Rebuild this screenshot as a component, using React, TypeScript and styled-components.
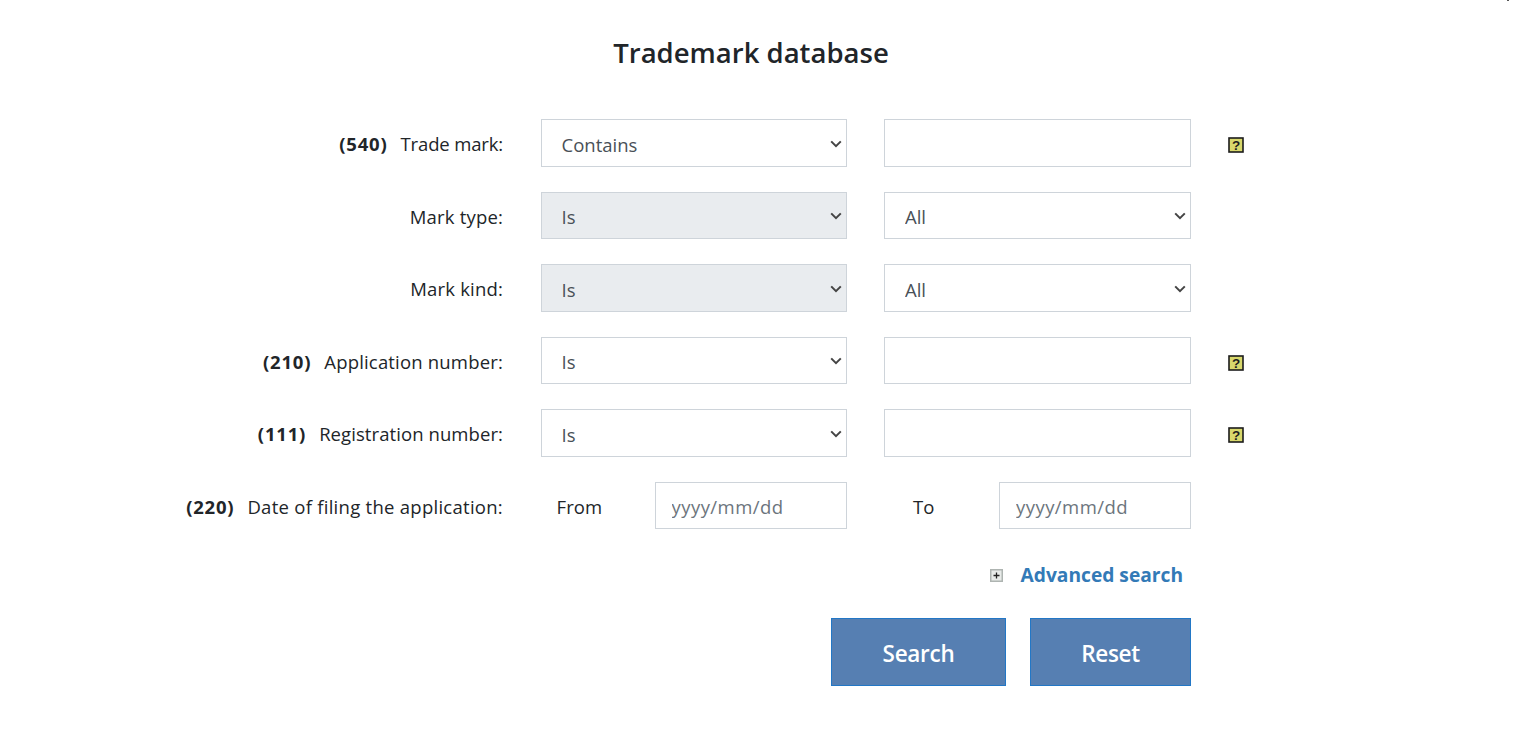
import styled, { createGlobalStyle } from "styled-components"

const GlobalStyle = createGlobalStyle`
  html, body {
    margin: 0;
    background: #fff;
  }
  body {
    font-family: "Open Sans", "Noto Sans", "Liberation Sans", sans-serif;
    color: #212529;
  }
`

const chevron = encodeURIComponent(
  `<svg xmlns="http://www.w3.org/2000/svg" width="12" height="8" viewBox="0 0 12 8"><path d="M1.2 1.4 6 6.2l4.8-4.8" fill="none" stroke="#444" stroke-width="2"/></svg>`
)

const Page = styled.div`
  width: 1516px;
  height: 733px;
  overflow: hidden;
  position: relative;
`

const CornerMark = styled.span`
  position: absolute;
  top: 0;
  right: 7px;
  width: 2px;
  height: 1px;
  background: #555;
`

const Title = styled.h1`
  margin: 0;
  padding-top: 33px;
  padding-right: 14px;
  height: 119px;
  box-sizing: border-box;
  text-align: center;
  font-size: 27.5px;
  line-height: 40px;
  font-weight: 600;
  color: #212529;
`

const Form = styled.form`
  display: flex;
  flex-direction: column;
  gap: 25px;
`

const Row = styled.div`
  display: grid;
  grid-template-columns: 503px 306px 307px 16px;
  column-gap: 37.5px;
  align-items: center;
  height: 47.5px;
`

const Label = styled.label<{ $track?: number }>`
  display: flex;
  justify-content: flex-end;
  gap: 13px;
  padding-top: 2px;
  font-size: 18.5px;
  letter-spacing: ${(p) => p.$track ?? 0.18}px;
  white-space: nowrap;
`

const Code = styled.b`
  font-weight: 700;
  letter-spacing: 0.8px;
`

const Select = styled.select<{ $locked?: boolean }>`
  appearance: none;
  width: 100%;
  height: 47.5px;
  box-sizing: border-box;
  padding: 3px 24px 0 20px;
  border: 1px solid #ced4da;
  border-radius: 0;
  background-color: ${(p) => (p.$locked ? "#e9ecef" : "#fff")};
  background-image: url("data:image/svg+xml,${chevron}");
  background-repeat: no-repeat;
  background-position: right 4px top calc(50% + 1px);
  color: #495057;
  font-family: inherit;
  font-size: 18.5px;
`

const Input = styled.input`
  width: 100%;
  height: 47.5px;
  box-sizing: border-box;
  padding: 3px 15px 0 16px;
  border: 1px solid #ced4da;
  border-radius: 0;
  background: #fff;
  color: #495057;
  font-family: inherit;
  font-size: 18.5px;
  letter-spacing: 0.45px;
  &::placeholder {
    color: #6c757d;
    opacity: 1;
  }
`

const DateCell = styled.div`
  display: grid;
  grid-template-columns: 1fr 192px;
  align-items: center;
`

const DateCaption = styled.span<{ $indent: number }>`
  padding: 2px 0 0 ${(p) => p.$indent}px;
  font-size: 18.5px;
  letter-spacing: 0.1px;
`

const HelpIcon = styled.svg`
  display: block;
  width: 16px;
  height: 16px;
  margin: 5px 0 0 -1px;
`

const AdvancedRow = styled.div`
  display: flex;
  align-items: center;
  justify-content: flex-end;
  width: 1183px;
  height: 30px;
  margin-top: 30px;
  gap: 18px;
`

const PlusIcon = styled.svg`
  display: block;
  width: 13px;
  height: 13px;
  margin-top: 2px;
`

const AdvancedLink = styled.a`
  color: #337ab7;
  font-size: 19.2px;
  font-weight: 700;
  text-decoration: none;
`

const Buttons = styled.div`
  display: flex;
  justify-content: flex-end;
  width: 1191px;
  margin-top: 28.5px;
  gap: 24px;
`

const Button = styled.button<{ $width: number }>`
  width: ${(p) => p.$width}px;
  height: 68px;
  box-sizing: border-box;
  padding-top: 4px;
  border: 1px solid #2277c6;
  border-radius: 0;
  background: #567fb2;
  color: #fff;
  font-family: inherit;
  font-size: 22.5px;
  font-weight: 600;
  letter-spacing: -0.3px;
`

const Help = () => (
  <HelpIcon viewBox="0 0 16 16">
    <rect x="1" y="1" width="14" height="14" fill="#d8d86c" stroke="#1c1c1c" strokeWidth="1.6" />
    <text x="8" y="13" textAnchor="middle" fontSize="13.5" fontWeight="700" fontFamily="Liberation Sans, sans-serif" fill="#1c1c1c">?</text>
  </HelpIcon>
)

const Plus = () => (
  <PlusIcon viewBox="0 0 13 13">
    <rect x="0.75" y="0.75" width="11.5" height="11.5" fill="#e8ebe9" stroke="#aeb4b1" strokeWidth="1.5" />
    <path d="M6.5 3.5v6M3.5 6.5h6" stroke="#222" strokeWidth="1.3" />
  </PlusIcon>
)

export default () => {
  return (
    <Page>
      <GlobalStyle />
      <CornerMark />
      <Title>Trademark database</Title>
      <Form>
        <Row>
          <Label $track={-0.15}><Code>(540)</Code>Trade mark:</Label>
          <Select defaultValue="Contains">
            <option>Contains</option>
            <option>Is</option>
          </Select>
          <Input />
          <Help />
        </Row>
        <Row>
          <Label>Mark type:</Label>
          <Select $locked><option>Is</option></Select>
          <Select><option>All</option></Select>
        </Row>
        <Row>
          <Label>Mark kind:</Label>
          <Select $locked><option>Is</option></Select>
          <Select><option>All</option></Select>
        </Row>
        <Row>
          <Label><Code>(210)</Code>Application number:</Label>
          <Select><option>Is</option></Select>
          <Input />
          <Help />
        </Row>
        <Row>
          <Label $track={0.08}><Code>(111)</Code>Registration number:</Label>
          <Select><option>Is</option></Select>
          <Input />
          <Help />
        </Row>
        <Row>
          <Label $track={0.27}><Code>(220)</Code>Date of filing the application:</Label>
          <DateCell>
            <DateCaption $indent={16}>From</DateCaption>
            <Input placeholder="yyyy/mm/dd" />
          </DateCell>
          <DateCell>
            <DateCaption $indent={29}>To</DateCaption>
            <Input placeholder="yyyy/mm/dd" />
          </DateCell>
        </Row>
      </Form>
      <AdvancedRow>
        <Plus />
        <AdvancedLink href="#">Advanced search</AdvancedLink>
      </AdvancedRow>
      <Buttons>
        <Button type="button" $width={175}>Search</Button>
        <Button type="button" $width={161}>Reset</Button>
      </Buttons>
    </Page>
  )
}
